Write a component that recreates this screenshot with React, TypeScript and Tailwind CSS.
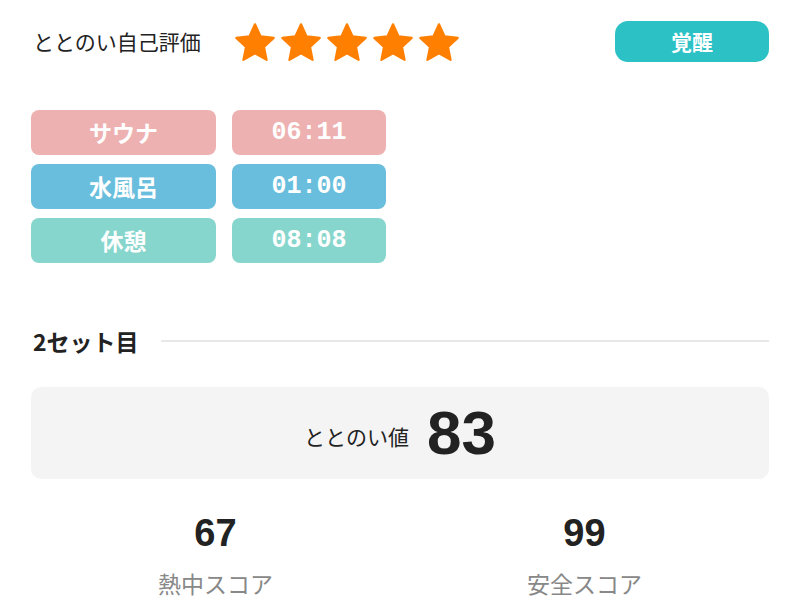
const jp = { fontFamily: '"Noto Sans CJK JP", sans-serif' };

function Star() {
  return (
    <svg width="44" height="42" viewBox="0 0 24 23" className="shrink-0">
      <path
        d="M12 1.8l3.05 6.6 7.2.85-5.32 4.93 1.42 7.12L12 17.75l-6.35 3.55 1.42-7.12L1.75 9.25l7.2-.85L12 1.8z"
        fill="#ff7f00"
        stroke="#ff7f00"
        strokeWidth="1.2"
        strokeLinejoin="round"
      />
    </svg>
  );
}

const rows = [
  { label: "サウナ", time: "06:11", bg: "bg-[#eeb1b1]" },
  { label: "水風呂", time: "01:00", bg: "bg-[#68bedc]" },
  { label: "休憩", time: "08:08", bg: "bg-[#87d6cd]" },
];

export default function App() {
  return (
    <div className="w-[800px] h-[600px] overflow-hidden bg-white px-[31px] pt-[21px] text-[#222]" style={jp}>
      <div className="flex items-center h-[41px]">
        <div className="w-[202px] pl-[2px] text-[21px] leading-none">ととのい自己評価</div>
        <div className="flex gap-[2px]">
          <Star />
          <Star />
          <Star />
          <Star />
          <Star />
        </div>
        <button className="ml-auto w-[154px] h-[41px] rounded-[13px] bg-[#2bc1c5] text-white text-[21px] font-bold">
          覚醒
        </button>
      </div>

      <div className="mt-[48px] flex flex-col gap-[9px]">
        {rows.map((r) => (
          <div key={r.label} className="flex gap-[16px]">
            <div className={`w-[185px] h-[45px] rounded-[8px] ${r.bg} flex items-center justify-center text-white text-[23px] font-bold`}>
              {r.label}
            </div>
            <div
              className={`w-[154px] h-[45px] rounded-[8px] ${r.bg} flex items-center justify-center text-white text-[25px] font-bold`}
              style={{ fontFamily: '"Liberation Mono", monospace' }}
            >
              {r.time}
            </div>
          </div>
        ))}
      </div>

      <div className="mt-[63px] flex items-center h-[30px]">
        <div className="w-[130px] pl-[2px] text-[23px] font-bold leading-none">2セット目</div>
        <div className="flex-1 h-[2px] bg-[#e8e8e8]" />
      </div>

      <div className="mt-[31px] h-[92px] rounded-[10px] bg-[#f4f4f4] flex items-center justify-center gap-[18px]">
        <span className="text-[21px] mt-[8px]">ととのい値</span>
        <span className="text-[62px] font-bold leading-none" style={{ fontFamily: '"Liberation Sans", sans-serif' }}>
          83
        </span>
      </div>

      <div className="mt-[30px] grid grid-cols-2">
        {[
          ["67", "熱中スコア"],
          ["99", "安全スコア"],
        ].map(([n, l]) => (
          <div key={l} className="flex flex-col items-center">
            <div className="text-[38px] font-bold leading-[48px]" style={{ fontFamily: '"Liberation Sans", sans-serif' }}>
              {n}
            </div>
            <div className="mt-[11px] text-[23px] text-[#888] leading-[30px]">{l}</div>
          </div>
        ))}
      </div>
    </div>
  );
}
